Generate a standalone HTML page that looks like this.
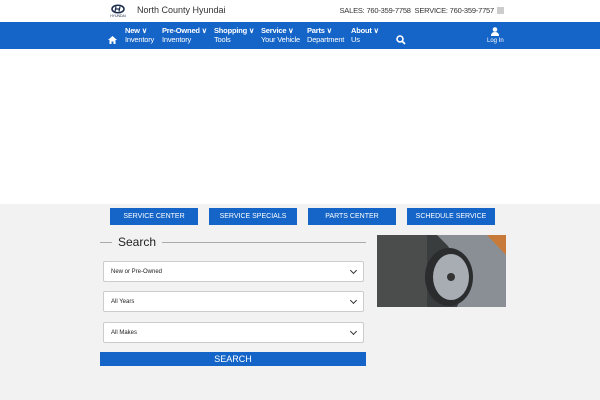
<html><head><style>
body{margin:0;width:600px;height:400px;background:#f2f2f2;font-family:"Liberation Sans",sans-serif;position:relative;overflow:hidden}
.a{position:absolute}
.top{left:0;top:0;width:600px;height:22px;background:#fff}
.nav{left:0;top:22px;width:600px;height:27px;background:#1565c8;border-bottom:1px solid #0d4fa0}
.wh{left:0;top:49px;width:600px;height:155px;background:#fff}
.ni{color:#fff;font-size:7.5px;line-height:9px;top:26px;letter-spacing:-0.2px;white-space:nowrap}
.btn{top:208px;height:17px;width:88px;background:#1565c8;color:#fff;font-size:7px;line-height:17px;text-align:center}
.sel{left:103px;width:252px;height:19px;background:#fff;border:1px solid #ccc;border-radius:2px;font-size:6px;color:#222;display:flex;align-items:center;padding-left:7px}
.sel:after{content:"";position:absolute;right:7px;top:6px;width:4px;height:4px;border-right:1.3px solid #333;border-bottom:1.3px solid #333;transform:rotate(45deg)}
</style></head><body>
<div class="a top"></div>
<svg class="a" style="left:108px;top:4px" width="20" height="14" viewBox="0 0 20 14"><ellipse cx="10" cy="5" rx="6" ry="3.8" fill="none" stroke="#1a2a4a" stroke-width="1.5"/><path d="M8 2.5 L7 7.5 M12 2.5 L11 7.5 M7.5 5 L11.5 5" stroke="#1a2a4a" stroke-width="1.2"/><text x="10" y="13" font-size="3.5" text-anchor="middle" fill="#1a2a4a">HYUNDAI</text></svg>
<div class="a" style="left:137px;top:5px;font-size:9px;color:#333">North County Hyundai</div>
<div class="a" style="right:106px;top:6px;font-size:7.5px;color:#333;white-space:nowrap;letter-spacing:-0.2px">SALES: 760-359-7758 &nbsp;SERVICE: 760-359-7757</div>
<div class="a" style="left:497px;top:7px;width:7px;height:7px;background:#ccc"></div>
<div class="a nav"></div>
<svg class="a" style="left:108px;top:36px" width="9" height="8" viewBox="0 0 9 8"><path d="M4.5 0 L9 4 H7.5 V8 H5.5 V5.5 H3.5 V8 H1.5 V4 H0Z" fill="#fff"/></svg>
<div class="a ni" style="left:125px"><b>New ∨</b><br>Inventory</div>
<div class="a ni" style="left:162px"><b>Pre-Owned ∨</b><br>Inventory</div>
<div class="a ni" style="left:214px"><b>Shopping ∨</b><br>Tools</div>
<div class="a ni" style="left:261px"><b>Service ∨</b><br>Your Vehicle</div>
<div class="a ni" style="left:307px"><b>Parts ∨</b><br>Department</div>
<div class="a ni" style="left:351px"><b>About ∨</b><br>Us</div>
<svg class="a" style="left:396px;top:35px" width="10" height="10" viewBox="0 0 10 10"><circle cx="4" cy="4" r="3" fill="none" stroke="#fff" stroke-width="1.6"/><path d="M6 6 L9 9" stroke="#fff" stroke-width="1.8"/></svg>
<svg class="a" style="left:490px;top:27px" width="10" height="9" viewBox="0 0 10 9"><circle cx="5" cy="2.5" r="2.3" fill="#fff"/><path d="M1 9 Q1 5 5 5 Q9 5 9 9Z" fill="#fff"/></svg>
<div class="a" style="left:487px;top:38px;font-size:6px;color:#fff">Log In</div>
<div class="a wh"></div>
<div class="a btn" style="left:110px">SERVICE CENTER</div>
<div class="a btn" style="left:209px">SERVICE SPECIALS</div>
<div class="a btn" style="left:308px">PARTS CENTER</div>
<div class="a btn" style="left:407px">SCHEDULE SERVICE</div>
<div class="a" style="left:100px;top:242px;width:266px;height:1px;background:#aaa"></div>
<div class="a" style="left:112px;top:235px;padding:0 6px;background:#f2f2f2;font-size:12px;color:#222">Search</div>
<div class="a sel" style="top:261px">New or Pre-Owned</div>
<div class="a sel" style="top:291px">All Years</div>
<div class="a sel" style="top:322px">All Makes</div>
<div class="a" style="left:100px;top:352px;width:266px;height:14px;background:#1565c8;color:#fff;font-size:9px;line-height:14px;text-align:center">SEARCH</div>
<svg class="a" style="left:377px;top:235px" width="129" height="72" viewBox="0 0 129 72"><rect width="129" height="72" fill="#3a3d3e"/><rect x="0" y="0" width="50" height="72" fill="#4a4d4c"/><path d="M60 0 H129 V72 H80 Q95 40 70 10Z" fill="#8a8f95"/><path d="M110 0 H129 V20Z" fill="#c87a3a"/><ellipse cx="72" cy="42" rx="24" ry="29" fill="#2a2c2e"/><ellipse cx="74" cy="42" rx="18" ry="23" fill="#a8adb3"/><circle cx="74" cy="42" r="4" fill="#333"/></svg>
</body></html>
